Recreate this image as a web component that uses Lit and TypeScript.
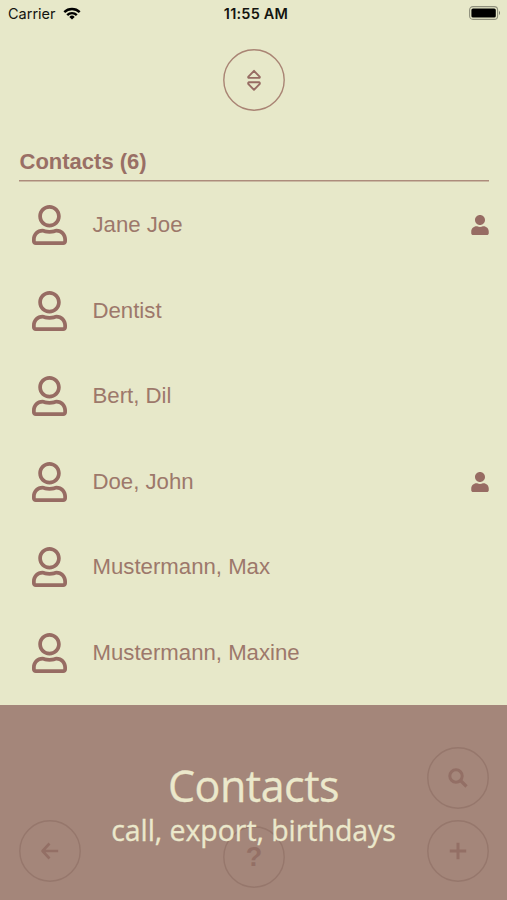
import { LitElement, html, css, svg } from "lit";
import { customElement, property } from "lit/decorators.js";

const userOutline = svg`<path d="M313.6 304c-28.7 0-42.5 16-89.6 16-47.1 0-60.8-16-89.6-16C60.2 304 0 364.2 0 438.4V464c0 26.5 21.5 48 48 48h352c26.5 0 48-21.5 48-48v-25.6c0-74.2-60.2-134.4-134.4-134.4zM400 464H48v-25.6c0-47.6 38.8-86.4 86.4-86.4 14.6 0 38.3 16 89.6 16 51.7 0 74.9-16 89.6-16 47.6 0 86.4 38.8 86.4 86.4V464zM224 288c79.5 0 144-64.5 144-144S303.5 0 224 0 80 64.5 80 144s64.5 144 144 144zm0-240c52.9 0 96 43.1 96 96s-43.1 96-96 96-96-43.1-96-96 43.1-96 96-96z"/>`;
const userSolid = svg`<path d="M224 256c70.7 0 128-57.3 128-128S294.7 0 224 0 96 57.3 96 128s57.3 128 128 128zm89.6 32h-16.7c-22.2 10.2-46.9 16-72.9 16s-50.6-5.8-72.9-16h-16.7C60.2 288 0 348.2 0 422.4V464c0 26.5 21.5 48 48 48h352c26.5 0 48-21.5 48-48v-41.6c0-74.2-60.2-134.4-134.4-134.4z"/>`;

const glyphs = {
  sort: svg`<path d="M12 2.800L17.800 8.800Q18 9.900 17 9.900H7Q6 9.900 6.200 8.800ZM12 21.800L17.800 15.800Q18 14.300 17 14.300H7Q6 14.300 6.200 15.800Z" stroke-width="1.900"/>`,
  search: svg`<circle cx="10" cy="10" r="6.200" stroke-width="3"/><path d="M15 15l5.500 5.500" stroke-width="3.200"/>`,
  plus: svg`<path d="M12 3.800v16.400M3.800 12h16.400" stroke-width="3"/>`,
  back: svg`<path d="M11.500 4.500L4.500 12l7 7.500M5 12h15.200" stroke-width="2.600"/>`,
  help: svg``,
};

@customElement("round-button")
class RoundButton extends LitElement {
  @property() icon = "";
  static styles = css`
    :host {
      display: grid;
      place-items: center;
      width: 62px;
      height: 62px;
    }
    .ring,
    .glyph,
    .mark {
      grid-area: 1 / 1;
    }
    .ring {
      width: 62px;
      height: 62px;
      fill: none;
      stroke: currentColor;
      stroke-width: 1.400;
    }
    .glyph {
      width: 24px;
      height: 24px;
      fill: none;
      stroke: var(--glyph);
      stroke-linejoin: round;
    }
    .mark {
      font: bold 27px/30px "Liberation Sans", sans-serif;
      color: var(--glyph);
    }
  `;
  render() {
    return html`
      <svg class="ring" viewBox="0 0 62 62"><circle cx="31" cy="31" r="30.200" /></svg>
      ${this.icon === "help"
        ? html`<span class="mark">?</span>`
        : html`<svg class="glyph" viewBox="0 0 24 24">${glyphs[this.icon as keyof typeof glyphs]}</svg>`}
    `;
  }
}

@customElement("contact-row")
class ContactRow extends LitElement {
  @property() name = "";
  @property({ type: Boolean }) linked = false;
  static styles = css`
    :host {
      display: flex;
      align-items: center;
      height: 85.5px;
      padding-left: 13px;
    }
    svg {
      fill: #976c63;
    }
    .avatar {
      width: 35px;
      height: 40px;
    }
    .name {
      flex: 1;
      margin-left: 25.500px;
      font-size: 22.200px;
      line-height: 26px;
      white-space: nowrap;
    }
    .badge {
      width: 18px;
      height: 20px;
    }
  `;
  render() {
    return html`
      <svg class="avatar" viewBox="0 0 448 512">${userOutline}</svg>
      <span class="name">${this.name}</span>
      ${this.linked ? html`<svg class="badge" viewBox="0 0 448 512">${userSolid}</svg>` : ""}
    `;
  }
}

@customElement("app-root")
class AppRoot extends LitElement {
  static styles = css`
    :host {
      display: flex;
      flex-direction: column;
      width: 507px;
      height: 900px;
      overflow: hidden;
      background: #e7e8c9;
      color: #9d786b;
      font-family: "Liberation Sans", sans-serif;
    }
    .status {
      display: grid;
      grid-template-columns: 1fr auto 1fr;
      align-items: center;
      height: 28px;
      padding: 0 6px 0 8px;
      box-sizing: border-box;
      color: #14140f;
      font: 14.500px/18px Inter, sans-serif;
    }
    .carrier {
      display: flex;
      align-items: center;
      gap: 7px;
    }
    .wifi {
      width: 18px;
      height: 13px;
      margin-top: -2px;
    }
    .time {
      margin-left: 3px;
      font-weight: 600;
      letter-spacing: 0.2px;
    }
    .battery {
      justify-self: end;
      width: 32px;
      height: 14px;
      margin-top: -2px;
    }
    .top {
      display: flex;
      justify-content: center;
      height: 104px;
      padding: 21px 0 0 1px;
      box-sizing: border-box;
      color: #a98474;
      --glyph: #976c63;
    }
    .list {
      flex: 1;
      min-height: 0;
      margin: 0 18px 0 19px;
    }
    .heading {
      margin: 0 0 1px;
      height: 49.500px;
      box-sizing: border-box;
      padding: 17px 0 0 0.500px;
      background: linear-gradient(#ad8c7c, #ad8c7c) 0 100% / 100% 1.500px no-repeat;
      font-size: 22px;
      line-height: 26px;
      color: #996f65;
    }
    .footer {
      position: relative;
      height: 195.500px;
      box-sizing: border-box;
      padding: 42.500px 18px 0 19px;
      background: #a4867a;
      color: #96776c;
      --glyph: #936f65;
    }
    .actions {
      display: grid;
      grid-template-columns: 1fr auto 1fr;
      row-gap: 11px;
    }
    .search {
      grid-column: 3;
      justify-self: end;
    }
    .back {
      grid-column: 1;
    }
    .help {
      margin-top: 6px;
    }
    .add {
      justify-self: end;
    }
    .caption {
      position: absolute;
      inset: 55.500px 0 auto;
      text-align: center;
      color: #ebe8cb;
      font-family: "Open Sans", sans-serif;
      white-space: nowrap;
      -webkit-text-stroke: 0.3px #ebe8cb;
    }
    .title {
      font-size: 43px;
      line-height: 52px;
      letter-spacing: -0.500px;
    }
    .subtitle {
      font-size: 28.500px;
      line-height: 36px;
      letter-spacing: -0.050px;
    }
  `;

  private contacts = [
    { name: "Jane Joe", linked: true },
    { name: "Dentist", linked: false },
    { name: "Bert, Dil", linked: false },
    { name: "Doe, John", linked: true },
    { name: "Mustermann, Max", linked: false },
    { name: "Mustermann, Maxine", linked: false },
  ];

  render() {
    return html`
      <div class="status">
        <span class="carrier">
          Carrier
          <svg class="wifi" viewBox="0 0 18 13" fill="none" stroke="#000" stroke-width="2.400">
            <path d="M1.300 5.200a11 11 0 0 1 15.400 0M4.200 8.100a6.900 6.900 0 0 1 9.600 0" />
            <path d="M9 12.600L6.300 9.900a3.900 3.900 0 0 1 5.400 0Z" fill="#000" stroke="none" />
          </svg>
        </span>
        <span class="time">11:55 AM</span>
        <svg class="battery" viewBox="0 0 32 14">
          <rect x=".6" y=".6" width="28" height="12.800" rx="3.400" fill="none" stroke="#8f907c" stroke-width="1.100" />
          <rect x="2.400" y="2.400" width="24.400" height="9.200" rx="1.600" />
          <path d="M30 4.800q2 2.200 0 4.400z" fill="#77786a" />
        </svg>
      </div>
      <div class="top"><round-button icon="sort"></round-button></div>
      <div class="list">
        <h1 class="heading">Contacts (6)</h1>
        ${this.contacts.map((c) => html`<contact-row .name=${c.name} .linked=${c.linked}></contact-row>`)}
      </div>
      <div class="footer">
        <div class="actions">
          <round-button class="search" icon="search"></round-button>
          <round-button class="back" icon="back"></round-button>
          <round-button class="help" icon="help"></round-button>
          <round-button class="add" icon="plus"></round-button>
        </div>
        <div class="caption">
          <div class="title">Contacts</div>
          <div class="subtitle">call, export, birthdays</div>
        </div>
      </div>
    `;
  }
}
